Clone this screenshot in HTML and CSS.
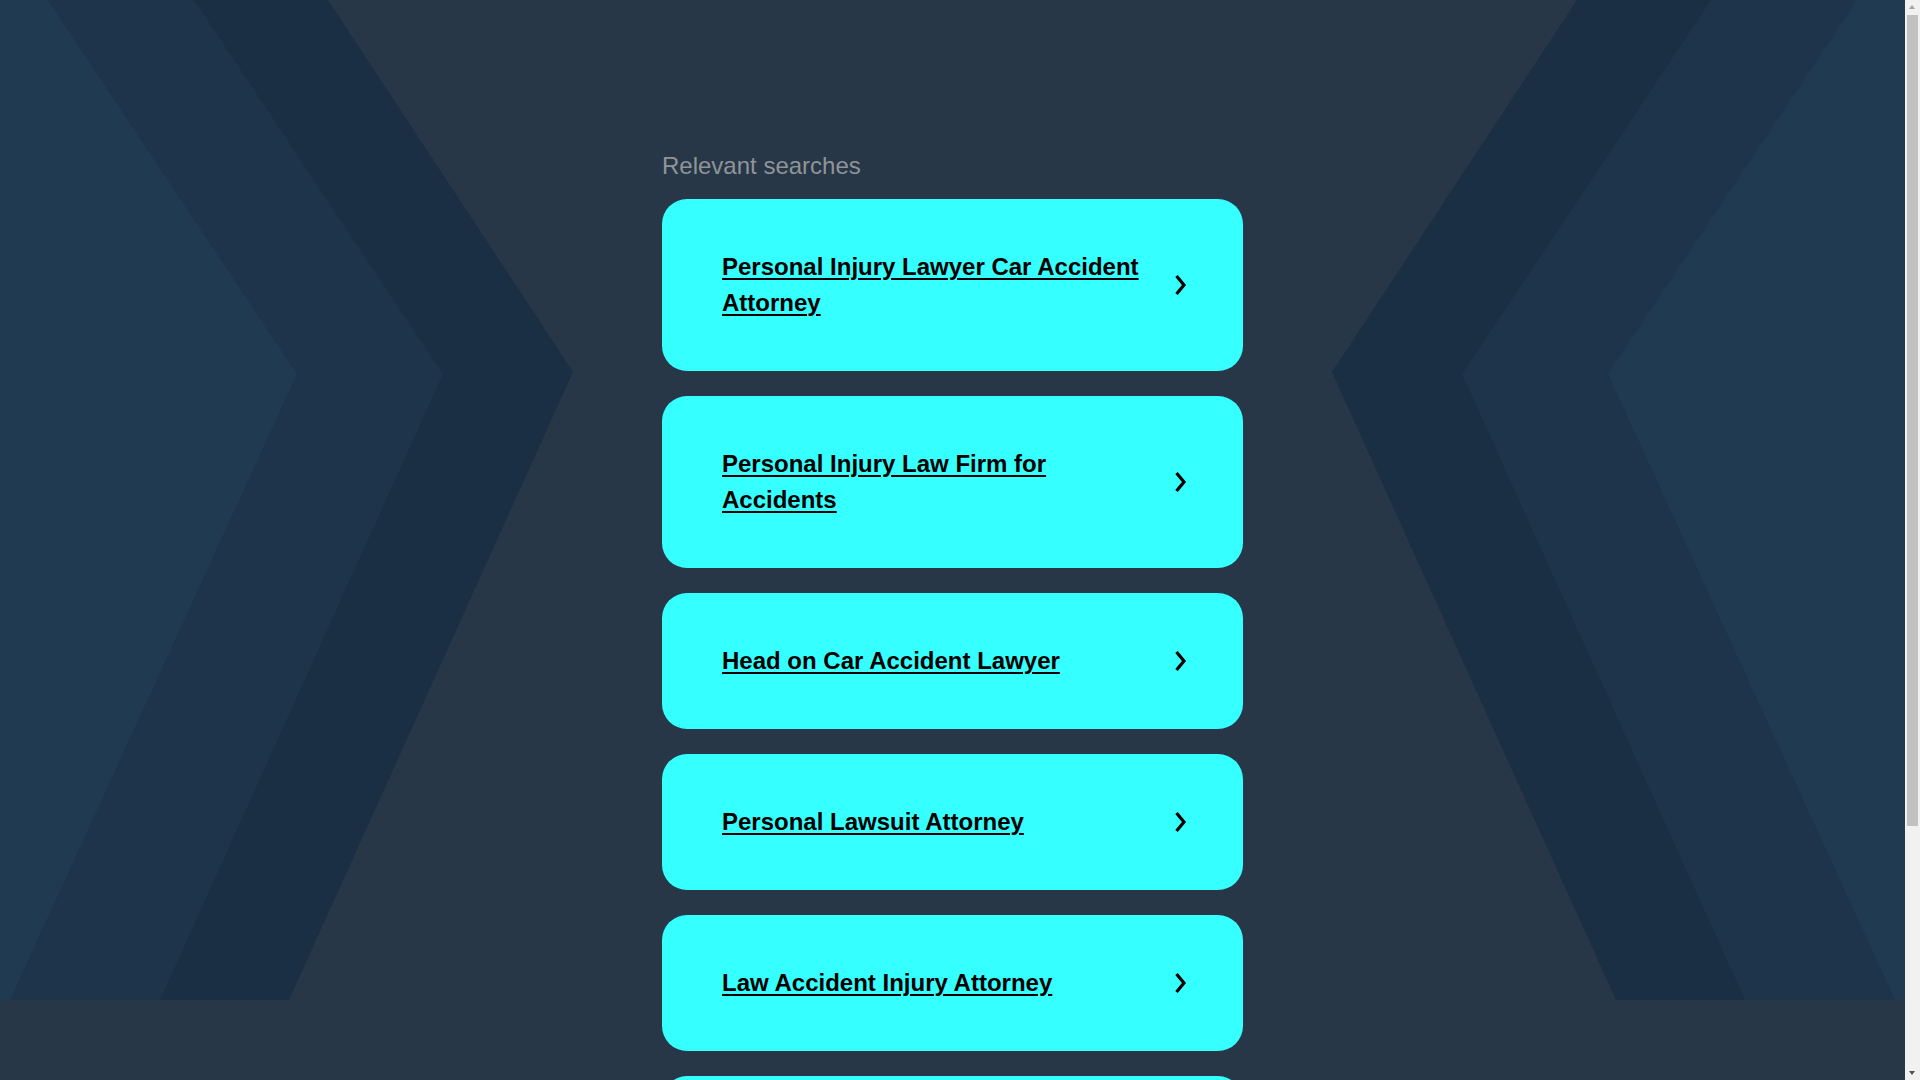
FILE: index.html
```html
<!DOCTYPE html>
<html lang="en">
<head>
<meta charset="utf-8">
<title>Relevant searches</title>
<link rel="stylesheet" href="styles.css">
</head>
<body>
<div class="page">
  <svg class="backdrop" viewBox="0 0 1905 1000" preserveAspectRatio="none" aria-hidden="true">
    <path d="M0,0 L328,0 L573,372 L289,1000 L0,1000 Z" fill="#1a2f44"/>
    <path d="M0,0 L194,0 L443,374 L160,1000 L0,1000 Z" fill="#1e344b"/>
    <path d="M0,0 L48,0 L297,374 L10,1000 L0,1000 Z" fill="#203a51"/>
    <path d="M1905,0 L1577,0 L1332,372 L1616,1000 L1905,1000 Z" fill="#1a2f44"/>
    <path d="M1905,0 L1711,0 L1462,374 L1745,1000 L1905,1000 Z" fill="#1e344b"/>
    <path d="M1905,0 L1857,0 L1608,374 L1895,1000 L1905,1000 Z" fill="#203a51"/>
  </svg>
  <main class="content">
    <h2 class="title">Relevant searches</h2>
    <ul class="results">
      <li><a class="card" href="#"><span class="label">Personal Injury Lawyer Car Accident Attorney</span><svg class="chev" viewBox="0 0 14 24"><polyline points="3.5,3 11,12 3.5,21"/></svg></a></li>
      <li><a class="card" href="#"><span class="label">Personal Injury Law Firm for Accidents</span><svg class="chev" viewBox="0 0 14 24"><polyline points="3.5,3 11,12 3.5,21"/></svg></a></li>
      <li><a class="card" href="#"><span class="label">Head on Car Accident Lawyer</span><svg class="chev" viewBox="0 0 14 24"><polyline points="3.5,3 11,12 3.5,21"/></svg></a></li>
      <li><a class="card" href="#"><span class="label">Personal Lawsuit Attorney</span><svg class="chev" viewBox="0 0 14 24"><polyline points="3.5,3 11,12 3.5,21"/></svg></a></li>
      <li><a class="card" href="#"><span class="label">Law Accident Injury Attorney</span><svg class="chev" viewBox="0 0 14 24"><polyline points="3.5,3 11,12 3.5,21"/></svg></a></li>
      <li><a class="card" href="#"><span class="label">Car Accident Attorney Near Me</span><svg class="chev" viewBox="0 0 14 24"><polyline points="3.5,3 11,12 3.5,21"/></svg></a></li>
      <li><a class="card" href="#"><span class="label">Best Car Accident Lawyers</span><svg class="chev" viewBox="0 0 14 24"><polyline points="3.5,3 11,12 3.5,21"/></svg></a></li>
    </ul>
  </main>
</div>
<div class="scrollbar" aria-hidden="true">
  <div class="sb-arrow sb-up"></div>
  <div class="sb-thumb"></div>
  <div class="sb-arrow sb-down"></div>
</div>
</body>
</html>
```

FILE: styles.css
```css
html, body {
  margin: 0;
  padding: 0;
}

html {
  overflow: hidden;
}

body {
  background: #273747;
  font-family: "Liberation Sans", Arial, sans-serif;
}

.page {
  position: relative;
  margin-right: 15px;
  min-height: 100vh;
}

.backdrop {
  position: absolute;
  top: 0;
  left: 0;
  width: 100%;
  height: 1000px;
  z-index: 0;
  display: block;
}

.content {
  position: relative;
  z-index: 1;
  width: 581px;
  margin: 0 auto;
  padding: 151px 0 1px;
}

.title {
  margin: 0 0 18px;
  font-size: 24px;
  font-weight: 400;
  line-height: 30px;
  color: #8f9499;
}

.results {
  list-style: none;
  margin: 0;
  padding: 0;
  display: flex;
  flex-direction: column;
  gap: 25px;
  padding-bottom: 25px;
}

.card {
  display: flex;
  align-items: center;
  gap: 24px;
  padding: 50px 56px 50px 60px;
  background: #35ffff;
  border-radius: 25px;
  color: #000;
  text-decoration: none;
}

.label {
  flex: 1;
  font-size: 24px;
  font-weight: 700;
  line-height: 36px;
  text-decoration: underline;
  text-decoration-thickness: 2px;
  text-underline-offset: 3px;
}

.chev {
  width: 14px;
  height: 24px;
  flex: none;
  fill: none;
  stroke: #000;
  stroke-width: 3.2;
  stroke-linejoin: miter;
  stroke-linecap: butt;
}

.scrollbar {
  position: fixed;
  top: 0;
  right: 0;
  width: 15px;
  height: 100vh;
  background: #f1f1f1;
  display: flex;
  flex-direction: column;
  align-items: center;
}

.sb-arrow {
  flex: none;
  width: 15px;
  height: 15px;
  position: relative;
}

.sb-up::after,
.sb-down::after {
  content: "";
  position: absolute;
  left: 4px;
  width: 0;
  height: 0;
  border-left: 3.5px solid transparent;
  border-right: 3.5px solid transparent;
}

.sb-up::after {
  top: 5px;
  border-bottom: 4px solid #a3a3a3;
}

.sb-down::after {
  top: 6px;
  border-top: 4px solid #505050;
}

.sb-thumb {
  width: 11px;
  height: 811px;
  background: #c1c1c1;
  margin-bottom: auto;
}
```
